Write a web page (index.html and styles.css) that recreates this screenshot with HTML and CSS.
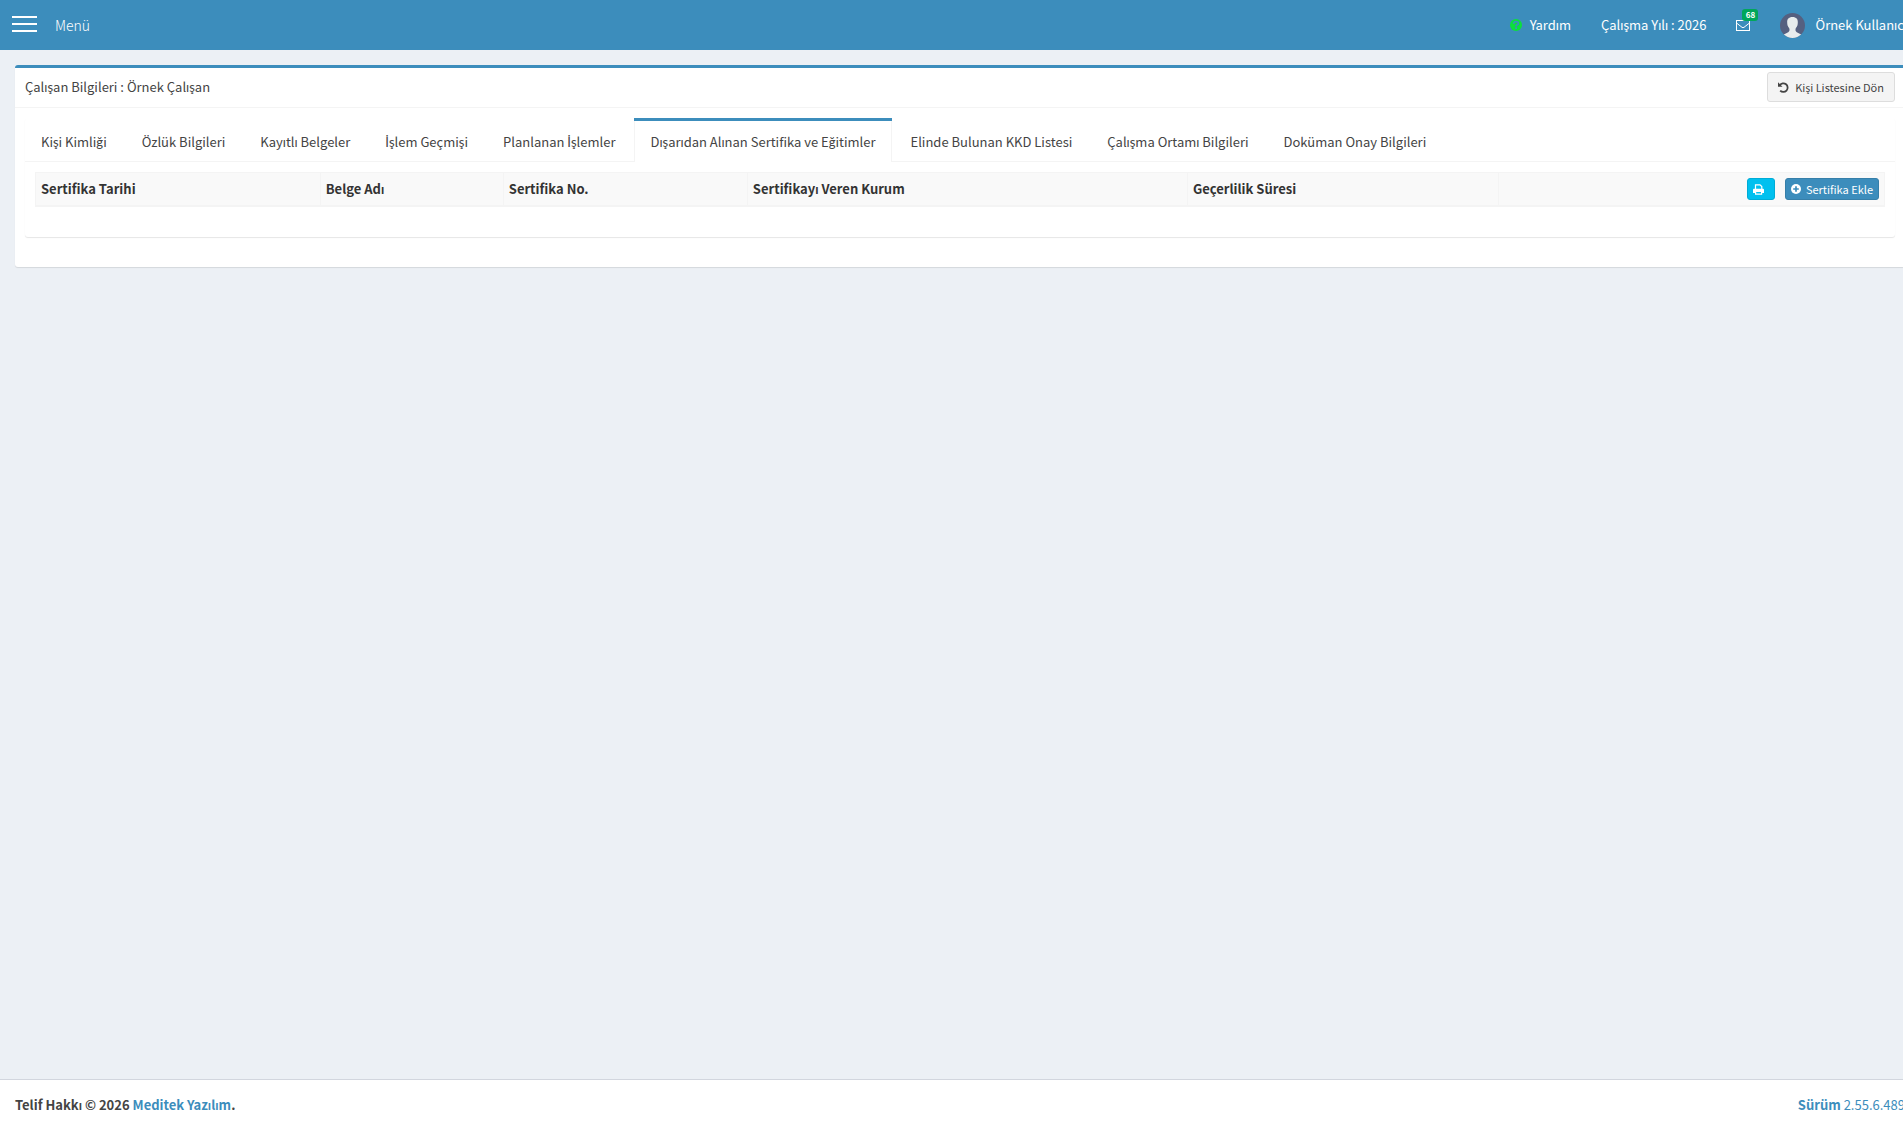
FILE: index.html
```html
<!DOCTYPE html>
<html lang="tr">
<head>
<meta charset="utf-8">
<title>Çalışan Bilgileri</title>
<link rel="stylesheet" href="styles.css">
</head>
<body>
<div class="wrapper">
  <header class="main-header">
    <button class="menu-toggle" type="button">
      <span class="bars"><span class="bar"></span><span class="bar"></span><span class="bar"></span></span>
      <span class="menu-label">Menü</span>
    </button>
    <nav class="top-nav">
      <a class="nav-link help" href="#">
        <svg class="icon-help" viewBox="0 0 12 12" width="12" height="12" aria-hidden="true"><circle cx="6" cy="6" r="6" fill="#0be03c"/><path d="M3.700 4.700C3.800 3.200 4.900 2.600 6 2.600c1.200 0 2.300.7 2.300 1.800 0 1.500-2.200 1.300-2.200 3M6.100 8.200v1.700" fill="none" stroke="#3c8dbc" stroke-width="1.800"/></svg>
        Yardım
      </a>
      <a class="nav-link" href="#">Çalışma Yılı : 2026</a>
      <a class="nav-link mail" href="#" aria-label="Mesajlar">
        <svg viewBox="0 0 14 11" width="14" height="11" aria-hidden="true"><rect x=".5" y=".5" width="13" height="10" fill="none" stroke="#fff"/><path d="M.5 3 6 7.300q1 .7 2 0L13.500 3" fill="none" stroke="#fff"/></svg>
        <span class="badge">68</span>
      </a>
      <a class="nav-link user" href="#">
        <svg class="avatar" viewBox="0 0 25 25" width="25" height="25" aria-hidden="true"><defs><clipPath id="round"><circle cx="12.500" cy="12.500" r="12.500"/></clipPath></defs><g clip-path="url(#round)"><rect width="25" height="25" fill="#556080"/><path d="M12.500 4C8.600 4 7 6.300 7.200 9.500c0 1 .1 2.200.4 3 .5 1.500 1.500 2.300 1.800 3.300.3 1.400.1 2.700-1.200 3.500-1.800 1-4.200 1.600-5.200 3.200V25h19v-2.500c-1-1.600-3.400-2.200-5.200-3.200-1.300-.8-1.500-2.100-1.200-3.500.3-1 1.300-1.800 1.800-3.300.3-.8.4-2 .4-3C18 6.300 16.400 4 12.500 4z" fill="#e7eced"/></g></svg>
        Örnek Kullanıcı
      </a>
    </nav>
  </header>

  <main class="content">
    <section class="box">
      <div class="box-header">
        <h1 class="box-title">Çalışan Bilgileri : Örnek Çalışan</h1>
        <button class="btn btn-default" type="button">
          <svg viewBox="0 0 11 11" width="11" height="11" aria-hidden="true"><path d="M1.800 3.200A4.300 4.300 0 1 1 2.200 8.600" fill="none" stroke="#444" stroke-width="1.800"/><path d="M0 .3v4.500h4.500z" fill="#444"/></svg>
          Kişi Listesine Dön
        </button>
      </div>
      <div class="box-body">
        <div class="tabs-panel">
          <ul class="tabs">
            <li class="tab"><a href="#">Kişi Kimliği</a></li>
            <li class="tab"><a href="#">Özlük Bilgileri</a></li>
            <li class="tab"><a href="#">Kayıtlı Belgeler</a></li>
            <li class="tab"><a href="#"><span class="dotted">İ</span>şlem Geçmişi</a></li>
            <li class="tab"><a href="#">Planlanan <span class="dotted">İ</span>şlemler</a></li>
            <li class="tab active"><a href="#">Dışarıdan Alınan Sertifika ve Eğitimler</a></li>
            <li class="tab"><a href="#">Elinde Bulunan KKD Listesi</a></li>
            <li class="tab"><a href="#">Çalışma Ortamı Bilgileri</a></li>
            <li class="tab"><a href="#">Doküman Onay Bilgileri</a></li>
          </ul>
          <div class="tab-content">
            <table class="grid">
              <colgroup><col class="c-date"><col class="c-name"><col class="c-no"><col class="c-org"><col class="c-valid"><col></colgroup>
              <thead>
                <tr>
                  <th>Sertifika Tarihi</th>
                  <th>Belge Adı</th>
                  <th>Sertifika No.</th>
                  <th>Sertifikayı Veren Kurum</th>
                  <th>Geçerlilik Süresi</th>
                  <th>
                    <div class="actions">
                      <button class="btn btn-xs btn-info" type="button" aria-label="Yazdır">
                        <svg viewBox="0 0 11 11" width="11" height="11" aria-hidden="true"><path d="M2.500 5V.8h4.500L8.800 2.500V5" fill="none" stroke="#fff" stroke-width="1.200"/><path d="M1 4.800h9a1 1 0 0 1 1 1V9H0V5.800a1 1 0 0 1 1-1z" fill="#fff"/><path d="M2.600 7.300h6v2.800h-6z" fill="#00c0ef" stroke="#fff" stroke-width="1.200"/></svg>
                      </button>
                      <button class="btn btn-xs btn-primary" type="button">
                        <svg viewBox="0 0 10 10" width="10" height="10" aria-hidden="true"><circle cx="5" cy="5" r="5" fill="#fff"/><path d="M5 2.200v5.600M2.200 5h5.600" stroke="#3c8dbc" stroke-width="1.700"/></svg>
                        Sertifika Ekle
                      </button>
                    </div>
                  </th>
                </tr>
              </thead>
            </table>
          </div>
        </div>
      </div>
    </section>
  </main>

  <footer class="main-footer">
    <strong>Telif Hakkı © 2026 <a href="#">Meditek Yazılım</a>.</strong>
    <a class="version" href="#"><b>Sürüm</b> 2.55.6.489</a>
  </footer>
</div>
</body>
</html>
```
FILE: styles.css
```css
* {
  box-sizing: border-box;
}

html {
  overflow: hidden;
}

body {
  margin: 0;
  background: #ecf0f5;
  color: #333;
  font-family: "Noto Sans CJK SC", Lato, sans-serif;
  font-size: 13px;
  line-height: 20px;
}

a {
  color: #3c8dbc;
  text-decoration: none;
}

button {
  font: inherit;
  cursor: pointer;
}

/* The main face has no dotted capital I */
.dotted {
  font-family: Lato, sans-serif;
}

.wrapper {
  display: flex;
  flex-direction: column;
  width: calc(100% + 17px);
  min-height: 100vh;
}

/* Header */
.main-header {
  display: flex;
  justify-content: space-between;
  height: 50px;
  background: #3c8dbc;
}

.menu-toggle {
  display: flex;
  align-items: center;
  gap: 18px;
  padding: 0 12px;
  border: 0;
  background: none;
  color: #fff;
}

.bars {
  display: flex;
  flex-direction: column;
  gap: 5px;
  width: 25px;
  padding-bottom: 2px;
}

.bar {
  height: 2px;
  background: #fff;
}

.menu-label {
  font-size: 14px;
  font-weight: 300;
}

.top-nav {
  display: flex;
}

.nav-link {
  display: flex;
  align-items: center;
  padding: 0 15px;
  color: #fff;
}

.help {
  gap: 8px;
}

.mail {
  position: relative;
}

.badge {
  position: absolute;
  top: 9px;
  right: 7px;
  width: 16px;
  height: 12px;
  border-radius: 3px;
  background: #00a65a;
  font-size: 8px;
  font-weight: 700;
  line-height: 12px;
  text-align: center;
}

.user {
  gap: 10px;
  padding-right: 13px;
}

/* Box */
.content {
  flex: 1;
  padding: 15px;
}

.box {
  border-top: 3px solid #3c8dbc;
  border-radius: 3px;
  background: #fff;
  box-shadow: 0 1px 1px rgba(0, 0, 0, 0.1);
}

.box-header {
  display: flex;
  align-items: center;
  justify-content: space-between;
  height: 40px;
  padding: 0 10px 1px;
  border-bottom: 1px solid #f4f4f4;
}

.box-title {
  margin: 0;
  color: #444;
  font-size: 13px;
  font-weight: 400;
}

.box-body {
  padding: 10px 10px 30px;
}

.btn {
  display: flex;
  align-items: center;
  border: 1px solid;
  border-radius: 3px;
  font-size: 11px;
  font-weight: 400;
}

.btn-default {
  gap: 6px;
  height: 30px;
  padding: 0 10px;
  border-color: #ddd;
  background: #f4f4f4;
  color: #444;
}

.btn-xs {
  gap: 5px;
  height: 22px;
  padding: 0 5px;
  color: #fff;
}

.btn-info {
  width: 28px;
  border-color: #00acd6;
  background: #00c0ef;
}

.btn-primary {
  border-color: #367fa9;
  background: #3c8dbc;
}

/* Tabs */
.tabs-panel {
  border-radius: 3px;
  box-shadow: 0 1px 1px rgba(0, 0, 0, 0.1);
}

.tabs {
  display: flex;
  gap: 3px;
  margin: 0;
  padding: 0;
  border-bottom: 1px solid #f4f4f4;
  list-style: none;
}

.tab {
  height: 44px;
  margin-bottom: -1px;
  border-top: 3px solid transparent;
}

.tab a {
  display: block;
  padding: 11px 16px 10px;
  color: #444;
}

.tab.active {
  border-top-color: #3c8dbc;
  background: #fff;
}

.tab.active a {
  padding: 11px 15px 10px;
  border-right: 1px solid #f4f4f4;
  border-left: 1px solid #f4f4f4;
}

.tab-content {
  padding: 10px 10px 30px;
}

/* Certificate table */
.grid {
  width: 100%;
  border-collapse: separate;
  border-spacing: 0;
  border-left: 1px solid #f4f4f4;
  table-layout: fixed;
}

.grid th {
  height: 35px;
  padding: 0 5px;
  border-top: 1px solid #f4f4f4;
  border-right: 1px solid #f4f4f4;
  border-bottom: 2px solid #f4f4f4;
  background: #f9f9f9;
  text-align: left;
}

.c-date { width: 15.4%; }
.c-name { width: 9.9%; }
.c-no { width: 13.2%; }
.c-org { width: 23.8%; }
.c-valid { width: 16.8%; }

.actions {
  display: flex;
  justify-content: flex-end;
  gap: 10px;
}

/* Footer */
.main-footer {
  display: flex;
  justify-content: space-between;
  padding: 15px;
  border-top: 1px solid #d2d6de;
  background: #fff;
  color: #444;
}
```
